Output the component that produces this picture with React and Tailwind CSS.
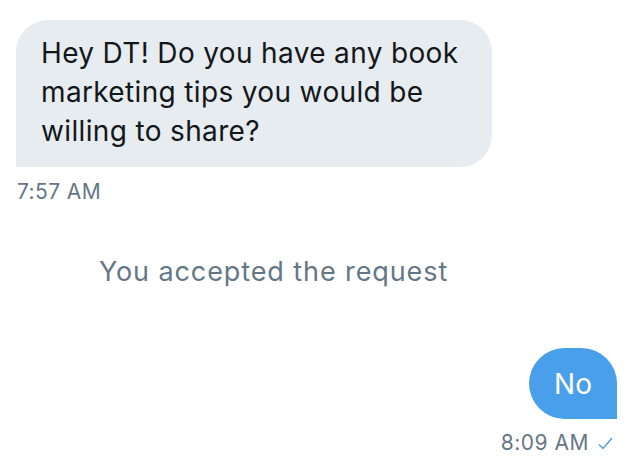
const font = { fontFamily: 'Inter, "Liberation Sans", Arial, sans-serif' };

const App = () => {
  return (
    <div
      className="flex h-[464px] w-[643px] flex-col bg-white pt-[20px]"
      style={font}
    >
      {/* incoming message */}
      <div className="ml-[16px] w-[476px] rounded-[32px] rounded-bl-none bg-[#e6ecf0] pb-[16px] pl-[25px] pr-[20px] pt-[14px] text-[28px] leading-[39px] tracking-[0.35px] text-[#14171a]">
        Hey DT! Do you have any book
        <br />
        marketing tips you would be
        <br />
        willing to share?
      </div>
      <p className="ml-[17px] mt-[12px] text-[21px] leading-[26px] tracking-[0.4px] text-[#657786]">
        7:57 AM
      </p>

      {/* system notice */}
      <p className="ml-[-96px] mt-[52px] text-center text-[27px] leading-[30px] tracking-[0.9px] text-[#657786]">
        You accepted the request
      </p>

      {/* outgoing message */}
      <div className="mr-[26px] mt-[61px] flex flex-col items-end">
        <div className="flex h-[71px] w-[88px] items-center justify-center rounded-[36px] rounded-br-none bg-[#4a9fea] text-[28px] text-white">
          No
        </div>
        <div className="mr-[4px] mt-[12px] flex items-center gap-[9px] text-[21px] leading-[24px] tracking-[0.5px] text-[#657786]">
          <span>8:09 AM</span>
          <svg width="15" height="13" viewBox="0 0 15 13" fill="none">
            <path d="M1 7.5 L5 11.5 L14 1" stroke="#4a9fea" strokeWidth="1.4" />
          </svg>
        </div>
      </div>
    </div>
  );
};

export default App;
